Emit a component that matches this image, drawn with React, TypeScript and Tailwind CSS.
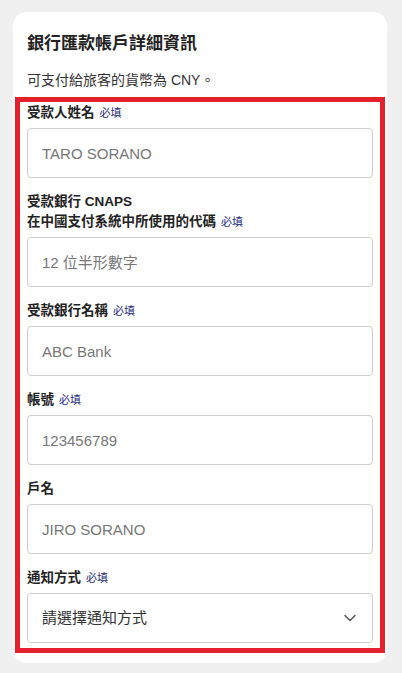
const fields = [
  { label: ['受款人姓名'], required: true, placeholder: 'TARO SORANO' },
  {
    label: ['受款銀行 CNAPS', '在中國支付系統中所使用的代碼'],
    required: true,
    placeholder: '12 位半形數字',
  },
  { label: ['受款銀行名稱'], required: true, placeholder: 'ABC Bank' },
  { label: ['帳號'], required: true, placeholder: '123456789' },
  { label: ['戶名'], required: false, placeholder: 'JIRO SORANO' },
]

const Required = () => (
  <span className="ml-[5px] text-[11px] font-normal text-[#1c2a7e]">必填</span>
)

const Label = ({ lines, required }: { lines: string[]; required: boolean }) => (
  <label className="mb-[5px] block text-[13.5px] font-bold leading-[20px] text-[#222]">
    {lines.map((line, i) => (
      <span key={i} className="block">
        {line}
        {required && i === lines.length - 1 && <Required />}
      </span>
    ))}
  </label>
)

export default function App() {
  return (
    <div
      className="min-h-[673px] bg-[#f0f0f0] pt-[12px]"
      style={{ fontFamily: '"Liberation Sans", "Noto Sans CJK TC", sans-serif' }}
    >
      <div className="mx-[13px] w-[374px] rounded-[14px] bg-white pb-[10px]">
        <div className="px-[14px] pt-[19px]">
          <h2 className="text-[17px] font-bold leading-[26px] text-[#222]">
            銀行匯款帳戶詳細資訊
          </h2>
          <p className="mt-[13px] text-[14px] leading-[20px] text-[#333]">
            可支付給旅客的貨幣為 CNY。
          </p>
        </div>

        <div className="mx-[2px] mt-[7px] border-[5px] border-[#e3202c] px-[7px] pt-[1px] pb-[5px]">
          <div className="flex flex-col gap-[14px]">
            {fields.map((f) => (
              <div key={f.placeholder}>
                <Label lines={f.label} required={f.required} />
                <input
                  type="text"
                  placeholder={f.placeholder}
                  className="block h-[50px] w-full rounded-[4px] border border-[#cfcfcf] bg-white pl-[14px] text-[15px] text-[#333] outline-none placeholder:text-[#777]"
                />
              </div>
            ))}
            <div>
              <Label lines={['通知方式']} required />
              <div className="flex h-[50px] w-full items-center justify-between rounded-[4px] border border-[#cfcfcf] bg-white pl-[14px] pr-[16px]">
                <span className="text-[15px] text-[#333]">請選擇通知方式</span>
                <svg width="12" height="8" viewBox="0 0 12 8" fill="none">
                  <path
                    d="M1 1.5L6 6.5L11 1.5"
                    stroke="#555"
                    strokeWidth="1.5"
                    strokeLinecap="round"
                    strokeLinejoin="round"
                  />
                </svg>
              </div>
            </div>
          </div>
        </div>
      </div>
    </div>
  )
}
